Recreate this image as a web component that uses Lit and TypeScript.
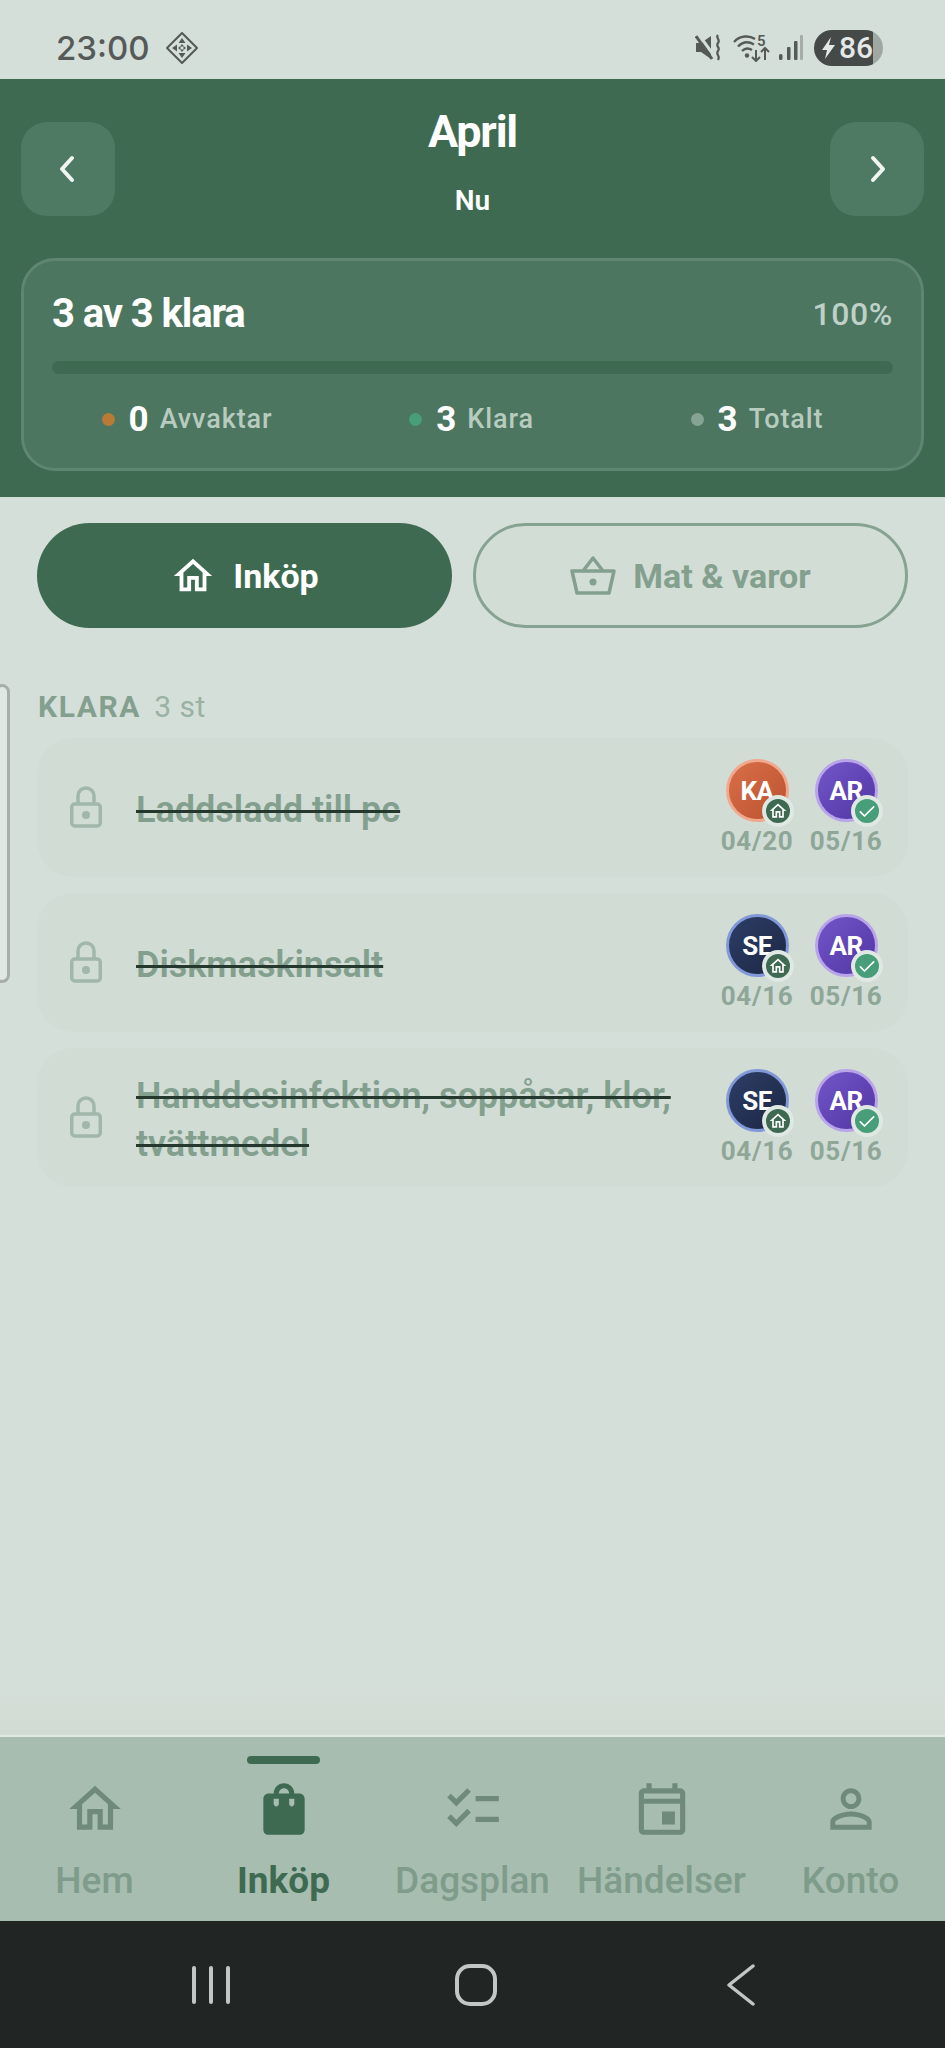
import { LitElement, html, css, svg } from "lit";
import { customElement } from "lit/decorators.js";

const HOME = "M12 5.69l5 4.5V18h-2v-6H9v6H7v-7.81l5-4.5M12 3L2 12h3v8h6v-6h2v6h6v-8h3L12 3z";
const BAG =
  "M18 6h-2c0-2.21-1.79-4-4-4S8 3.79 8 6H6c-1.1 0-2 .9-2 2v12c0 1.1.9 2 2 2h12c1.1 0 2-.9 2-2V8c0-1.1-.9-2-2-2zm-8 4c0 .55-.45 1-1 1s-1-.45-1-1V8h2v2zm2-6c1.1 0 2 .9 2 2h-4c0-1.1.9-2 2-2zm4 6c0 .55-.45 1-1 1s-1-.45-1-1V8h2v2z";
const CHECKLIST =
  "M22 7h-9v2h9V7zm0 8h-9v2h9v-2zM5.54 11L2 7.46l1.41-1.41 2.12 2.12 4.24-4.24 1.41 1.41L5.54 11zm0 8L2 15.46l1.41-1.41 2.12 2.12 4.24-4.24 1.41 1.41L5.54 19z";
const EVENT =
  "M19 4h-1V2h-2v2H8V2H6v2H5c-1.11 0-1.99.9-1.99 2L3 20c0 1.1.89 2 2 2h14c1.1 0 2-.9 2-2V6c0-1.1-.9-2-2-2zm0 16H5V10h14v10zm0-12H5V6h14v2zm-2 5h-5v5h5v-5z";
const PERSON =
  "M12 5.9c1.16 0 2.1.94 2.1 2.1s-.94 2.1-2.1 2.1S9.9 9.16 9.9 8s.94-2.1 2.1-2.1m0 9c2.97 0 6.1 1.46 6.1 2.1v1.1H5.9V17c0-.64 3.13-2.1 6.1-2.1M12 4C9.79 4 8 5.79 8 8s1.79 4 4 4 4-1.79 4-4-1.79-4-4-4zm0 9c-2.67 0-8 1.34-8 4v3h16v-3c0-2.66-5.33-4-8-4z";

const NAV = [
  { label: "Hem", icon: HOME },
  { label: "Inköp", icon: BAG, active: true },
  { label: "Dagsplan", icon: CHECKLIST },
  { label: "Händelser", icon: EVENT },
  { label: "Konto", icon: PERSON },
];

const STATS = [
  { n: 0, label: "Avvaktar", tone: "amber" },
  { n: 3, label: "Klara", tone: "green" },
  { n: 3, label: "Totalt", tone: "grey" },
];

const arne = { who: "AR", tone: "ar", badge: "check", date: "05/16" };
const TASKS = [
  { text: "Laddsladd till pc", stamps: [{ who: "KA", tone: "ka", badge: "home", date: "04/20" }, arne] },
  { text: "Diskmaskinsalt", stamps: [{ who: "SE", tone: "se", badge: "home", date: "04/16" }, arne] },
  {
    text: "Handdesinfektion, soppåsar, klor, tvättmedel",
    stamps: [{ who: "SE", tone: "se", badge: "home", date: "04/16" }, arne],
  },
];

/** One person + date column at the right end of a shopping row. */
@customElement("user-stamp")
export class UserStamp extends LitElement {
  static properties = {
    who: { type: String },
    tone: { type: String },
    badge: { type: String },
    date: { type: String },
  };

  declare who: string;
  declare tone: string;
  declare badge: string;
  declare date: string;

  static styles = css`
    :host {
      display: flex;
      flex-direction: column;
      align-items: center;
      width: 70px;
    }
    .avatar {
      position: relative;
      box-sizing: border-box;
      width: 63px;
      height: 63px;
      border-radius: 50%;
      border: 3px solid;
      display: flex;
      align-items: center;
      justify-content: center;
      color: #fff;
      font-size: 26px;
      font-weight: 700;
      letter-spacing: -0.5px;
    }
    .ka {
      background: linear-gradient(135deg, #d96f48, #bb5230);
      border-color: #f0a88e;
    }
    .se {
      background: linear-gradient(135deg, #2d3d66, #1c2744);
      border-color: #8199d8;
    }
    .ar {
      background: linear-gradient(135deg, #7355c8, #5036a4);
      border-color: #b9a4ea;
    }
    .badge {
      position: absolute;
      right: -8px;
      bottom: -8px;
      box-sizing: border-box;
      width: 32px;
      height: 32px;
      border-radius: 50%;
      border: 4px solid #dfe8e3;
      display: flex;
      align-items: center;
      justify-content: center;
    }
    .badge.home {
      background: #3e6a52;
    }
    .badge.check {
      background: #479e78;
    }
    .badge svg {
      width: 20px;
      height: 20px;
      display: block;
    }
    .date {
      margin-top: 4px;
      font-size: 26px;
      line-height: 30px;
      font-weight: 700;
      letter-spacing: 0.6px;
      color: #8ea797;
      white-space: nowrap;
    }
  `;

  render() {
    return html`
      <div class="avatar ${this.tone}">
        ${this.who}
        <span class="badge ${this.badge}">
          ${this.badge === "home"
            ? html`<svg viewBox="0 0 24 24" fill="#fff"><path d=${HOME} /></svg>`
            : html`<svg viewBox="0 0 24 24" fill="none" stroke="#fff" stroke-width="2" stroke-linecap="round" stroke-linejoin="round">
                <path d="M4 13l5 5L20 7" />
              </svg>`}
        </span>
      </div>
      <div class="date">${this.date}</div>
    `;
  }
}

@customElement("app-root")
export class AppRoot extends LitElement {
  static styles = css`
    :host {
      display: flex;
      flex-direction: column;
      position: relative;
      height: 2048px;
      overflow: hidden;
      background: #d5dfd9;
      font-family: Roboto, "Noto Sans", sans-serif;
    }
    svg {
      display: block;
      flex: none;
    }

    /* status bar */
    .status {
      height: 79px;
      flex: none;
      box-sizing: border-box;
      padding: 16px 62px 0 56px;
      display: flex;
      align-items: center;
      justify-content: space-between;
      color: #555a58;
    }
    .status-side {
      display: flex;
      align-items: center;
    }
    .clock {
      font-family: Inter, Roboto, sans-serif;
      font-size: 33px;
      font-weight: 500;
      margin-right: 15px;
    }
    .ic-mute {
      margin-right: 11px;
    }
    .ic-wifi {
      margin: -4px 9px 0 0;
    }
    .battery {
      width: 69px;
      height: 36px;
      box-sizing: border-box;
      margin-left: 11px;
      padding-left: 7px;
      border-radius: 18px;
      background: linear-gradient(to right, #454947 59px, #a0a8a4 59px);
      display: flex;
      align-items: center;
      gap: 3px;
      color: #e4e8e6;
      font-size: 30px;
      font-weight: 500;
    }

    /* green header */
    .hero {
      flex: none;
      background: #3e6a52;
      padding: 29px 21px 26px;
    }
    .hero-top {
      display: flex;
      align-items: flex-end;
      justify-content: space-between;
    }
    .arrow {
      width: 94px;
      height: 94px;
      border-radius: 26px;
      background: #4e7962;
      display: flex;
      align-items: center;
      justify-content: center;
    }
    .month {
      text-align: center;
      color: #fff;
      font-weight: 700;
    }
    .month-name {
      font-size: 45px;
      line-height: 48px;
      letter-spacing: -1.2px;
    }
    .month-sub {
      margin-top: 29px;
      font-size: 28px;
      line-height: 31px;
      font-weight: 600;
    }
    .summary {
      margin-top: 42px;
      padding: 33px 28px 27px;
      border: 3px solid #5f8671;
      border-radius: 34px;
      background: #4c7660;
    }
    .summary-head {
      display: flex;
      align-items: center;
      justify-content: space-between;
      line-height: 40px;
    }
    .summary-title {
      font-size: 40px;
      font-weight: 700;
      letter-spacing: -1.1px;
      color: #fff;
    }
    .summary-pct {
      font-size: 32px;
      font-weight: 500;
      letter-spacing: 0.6px;
      color: #bfd0c6;
    }
    .track {
      height: 13px;
      margin-top: 27px;
      border-radius: 7px;
      background: #3e6a52;
    }
    .stats {
      display: grid;
      grid-template-columns: 270px 1fr 272px;
      margin-top: 23px;
      height: 44px;
    }
    .stat {
      display: flex;
      align-items: center;
      justify-content: center;
      color: #b7ccbf;
      font-size: 27px;
      font-weight: 500;
      letter-spacing: 0.9px;
    }
    .stat b {
      margin: 0 11px 0 14px;
      color: #fff;
      font-size: 35px;
      font-weight: 700;
      letter-spacing: 0;
    }
    .dot {
      width: 13px;
      height: 13px;
      border-radius: 50%;
    }
    .amber {
      background: #b87a35;
    }
    .green {
      background: #479e78;
    }
    .grey {
      background: #86a494;
    }

    /* list area */
    .main {
      flex: 1;
      min-height: 0;
      padding: 26px 37px 0;
      background: linear-gradient(to top, #d0dbd3, #d5dfd9 50px);
    }
    .tabs {
      display: flex;
      gap: 21px;
    }
    .tab {
      box-sizing: border-box;
      height: 105px;
      flex-basis: 0;
      border-radius: 53px;
      display: flex;
      align-items: center;
      justify-content: center;
      gap: 17px;
      font-size: 34px;
      font-weight: 700;
    }
    .tab.on {
      flex-grow: 415;
      background: #3e6a52;
      color: #fff;
    }
    .tab.off {
      flex-grow: 429;
      border: 3px solid #86a391;
      background: #d2ddd5;
      color: #83a08e;
    }
    .section {
      display: flex;
      align-items: baseline;
      gap: 13px;
      margin: 62px 1px 14px;
      line-height: 34px;
      color: #83a08e;
    }
    .section b {
      font-size: 30px;
      font-weight: 700;
      letter-spacing: 1.6px;
    }
    .section span {
      font-size: 30px;
      letter-spacing: 0.5px;
      color: #9ab1a3;
    }
    .list {
      display: flex;
      flex-direction: column;
      gap: 16px;
    }
    .row {
      box-sizing: border-box;
      height: 139px;
      border-radius: 36px;
      background: #d1dcd5;
      padding: 0 27px 0 33px;
      display: flex;
      align-items: center;
    }
    .lock {
      margin-top: -1px;
    }
    .row-text {
      flex: 1;
      min-width: 0;
      margin: 4px 32px 0 34px;
      font-size: 36px;
      line-height: 48px;
      font-weight: 600;
      color: #83a08e;
      text-decoration: line-through;
      text-decoration-color: #24382e;
      text-decoration-thickness: 3px;
    }
    .stamps {
      display: flex;
      gap: 19px;
      flex: none;
    }

    /* system edge handle */
    .edge {
      position: absolute;
      left: -6px;
      top: 684px;
      width: 10px;
      height: 293px;
      border: 3px solid #a8aeaa;
      border-radius: 9px;
      background: #e0e8e3;
    }

    /* bottom navigation */
    .nav {
      flex: none;
      height: 186px;
      box-sizing: border-box;
      border-top: 2px solid #dfe8e2;
      background: #a7bdb0;
      display: grid;
      grid-template-columns: repeat(5, 1fr);
    }
    .nav-item {
      position: relative;
      display: flex;
      flex-direction: column;
      align-items: center;
      padding-top: 41px;
      font-size: 37px;
      font-weight: 500;
      line-height: 42px;
      color: #7f9c8a;
      white-space: nowrap;
    }
    .nav-item svg {
      width: 62px;
      height: 62px;
      margin-bottom: 20px;
      fill: #6f8a7b;
    }
    .nav-item.active {
      color: #3e6a52;
      font-weight: 700;
    }
    .nav-item.active svg {
      fill: #3e6a52;
    }
    .nav-mark {
      position: absolute;
      top: 19px;
      width: 73px;
      height: 8px;
      border-radius: 4px;
      background: #3e6a52;
    }
    .sysbar {
      flex: none;
      height: 127px;
      background: #212624;
      display: grid;
      grid-template-columns: repeat(3, 1fr);
      padding: 0 72px 0 78px;
      align-items: center;
      justify-items: center;
    }
  `;

  private statusIcons() {
    return html`
      <svg class="ic-mute" width="27" height="27" viewBox="0 0 27 27">
        <path d="M1 9h5l10-7v23L6 18H1z" fill="#555a58" />
        <path d="M4 1l16 22" stroke="#d5dfd9" stroke-width="3" />
        <path d="M1 2l16 23" stroke="#555a58" stroke-width="3" />
        <path d="M23 1c-3 3 3 4 0 8s3 4 0 8 3 4 0 9" fill="none" stroke="#555a58" stroke-width="2.200" />
      </svg>
      <svg class="ic-wifi" width="37" height="32" viewBox="0 -4 37 32">
        <g fill="none" stroke="#555a58" stroke-width="2.400">
          <path d="M1 8C7 1.500 16 1 22 5" />
          <path d="M5 12.500c5-5 11-5 16-2" />
          <path d="M9 17c3-3 7-3 10-1" />
          <path d="M23 16v11m-4-4 4 4 4-4" stroke-width="2" />
          <path d="M32 26V14m-4 4 4-4 4 4" stroke-width="2" />
        </g>
        <circle cx="14" cy="21.500" r="2.200" fill="#555a58" />
        <text x="24" y="11.500" font-size="15" font-weight="600" font-family="Roboto, sans-serif" fill="#555a58">5</text>
      </svg>
      <svg width="24" height="26" viewBox="0 0 24 26">
        <rect x="0" y="19" width="3.500" height="6" rx="1.500" fill="#555a58" />
        <rect x="8" y="12" width="3.500" height="13" rx="1" fill="#555a58" />
        <rect x="15" y="6" width="3.500" height="19" rx="1" fill="#555a58" />
        <rect x="21" y="0" width="3" height="25" rx="1" fill="#a4adaa" />
      </svg>
    `;
  }

  private diamond() {
    return html`<svg width="34" height="34" viewBox="0 0 34 34">
      <path d="M17 2L32 17 17 32 2 17z" fill="none" stroke="#555a58" stroke-width="2" stroke-linejoin="round" />
      <g fill="#555a58">
        ${[0, 90, 180, 270].map(
          (a) => svg`<path transform="rotate(${a} 17 17)" d="M17 7l3.500 5h-7zM15 15.500h4l-2 -2.500z" />`
        )}
      </g>
    </svg>`;
  }

  private chevron(points: string) {
    return html`<svg width="20" height="30" viewBox="0 0 20 30">
      <path d=${points} fill="none" stroke="#f1f5f2" stroke-width="4" stroke-linecap="round" stroke-linejoin="round" />
    </svg>`;
  }

  private lock() {
    return html`<svg class="lock" width="32" height="42" viewBox="0 0 32 42" fill="none" stroke="#a0b7a9" stroke-width="3.500">
      <rect x="1.750" y="18" width="28.500" height="22" rx="3" />
      <path d="M8 18V10a8 8 0 0 1 16 0v8" />
      <circle cx="16" cy="29" r="4" fill="#a0b7a9" stroke="none" />
    </svg>`;
  }

  render() {
    return html`
      <div class="status">
        <div class="status-side"><span class="clock">23:00</span>${this.diamond()}</div>
        <div class="status-side">
          ${this.statusIcons()}
          <div class="battery">
            <svg width="15" height="24" viewBox="0 0 15 24"><path d="M10 1L1 14h5l-2 9 10-14H8z" fill="#e4e8e6" /></svg>
            86
          </div>
        </div>
      </div>

      <header class="hero">
        <div class="hero-top">
          <div class="arrow">${this.chevron("M14 4L4 15l10 11")}</div>
          <div class="month">
            <div class="month-name">April</div>
            <div class="month-sub">Nu</div>
          </div>
          <div class="arrow">${this.chevron("M6 4l10 11L6 26")}</div>
        </div>
        <div class="summary">
          <div class="summary-head">
            <span class="summary-title">3 av 3 klara</span>
            <span class="summary-pct">100%</span>
          </div>
          <div class="track"></div>
          <div class="stats">
            ${STATS.map(
              (s) => html`<div class="stat"><i class="dot ${s.tone}"></i><b>${s.n}</b>${s.label}</div>`
            )}
          </div>
        </div>
      </header>

      <main class="main">
        <div class="tabs">
          <div class="tab on">
            <svg width="46" height="46" viewBox="0 0 24 24" fill="#fff"><path d=${HOME} /></svg>
            Inköp
          </div>
          <div class="tab off">
            <svg width="46" height="40" viewBox="0 0 46 40" fill="none" stroke="#83a08e" stroke-width="3.500" stroke-linejoin="round">
              <path d="M2 15h42l-5 22H7z" />
              <path d="M13 15L23 2l10 13" />
              <circle cx="23" cy="26" r="3.500" fill="#83a08e" stroke="none" />
            </svg>
            Mat &amp; varor
          </div>
        </div>

        <div class="section"><b>KLARA</b><span>3 st</span></div>
        <div class="list">
          ${TASKS.map(
            (t) => html`
              <div class="row">
                ${this.lock()}
                <div class="row-text">${t.text}</div>
                <div class="stamps">
                  ${t.stamps.map(
                    (s) => html`<user-stamp who=${s.who} tone=${s.tone} badge=${s.badge} date=${s.date}></user-stamp>`
                  )}
                </div>
              </div>
            `
          )}
        </div>
      </main>

      <div class="edge"></div>

      <nav class="nav">
        ${NAV.map(
          (n) => html`
            <div class="nav-item ${n.active ? "active" : ""}">
              ${n.active ? html`<div class="nav-mark"></div>` : ""}
              <svg viewBox="0 0 24 24"><path d=${n.icon} /></svg>
              ${n.label}
            </div>
          `
        )}
      </nav>

      <div class="sysbar">
        <svg width="38" height="40" viewBox="0 0 38 40" fill="#c2c6c4">
          <rect x="0" y="1" width="4" height="38" rx="2" />
          <rect x="17" y="1" width="4" height="38" rx="2" />
          <rect x="34" y="1" width="4" height="38" rx="2" />
        </svg>
        <svg width="42" height="42" viewBox="0 0 42 42" fill="none" stroke="#c2c6c4" stroke-width="4">
          <rect x="2" y="2" width="38" height="38" rx="13" />
        </svg>
        <svg width="28" height="42" viewBox="0 0 28 42" fill="none" stroke="#c2c6c4" stroke-width="3.500" stroke-linecap="round" stroke-linejoin="round">
          <path d="M26 2L2 21l24 19" />
        </svg>
      </div>
    `;
  }
}
